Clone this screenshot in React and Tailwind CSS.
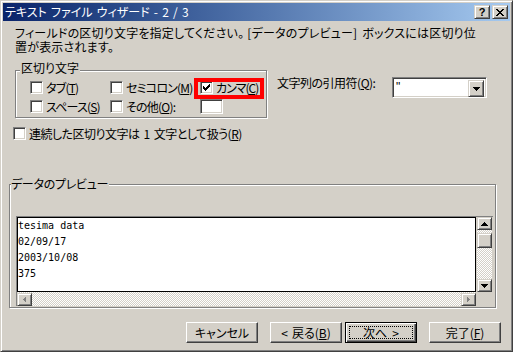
import React from "react";

function Check({ checked = false }) {
  return (
    <div className="w-[13px] h-[13px] shrink-0 bg-white border border-t-[#808080] border-l-[#808080] border-r-white border-b-white shadow-[inset_1px_1px_#404040,inset_-1px_-1px_#d4d0c8] flex items-center justify-center">
      {checked && (
        <svg width="7" height="7" viewBox="0 0 7 7" shapeRendering="crispEdges">
          <path d="M6 0h1v3h-1v1h-1v1h-1v1h-1v1h-1v-1h-1v-1h-1v-3h1v1h1v1h1v-1h1v-1h1z" fill="#000" />
        </svg>
      )}
    </div>
  );
}

function CheckItem({ checked, children, className = "", track = "tracking-[-0.8px]" }) {
  return (
    <div className={"flex items-center h-[13px] " + className}>
      <Check checked={checked} />
      <span className={"ml-[3px] whitespace-nowrap leading-[14px] " + track}>{children}</span>
    </div>
  );
}

function Btn({ children, def = false }) {
  if (def) {
    return (
      <div className="relative w-[72px] h-[21px] border border-black shadow-[inset_1px_1px_#fff,inset_-1px_-1px_#404040,inset_-2px_-2px_#808080] flex items-center justify-center whitespace-pre">
        {children}
        <div className="absolute inset-[3px] border border-dotted border-black" />
      </div>
    );
  }
  return (
    <div className="w-[72px] h-[21px] border border-t-white border-l-white border-r-[#404040] border-b-[#404040] shadow-[inset_-1px_-1px_#808080] flex items-center justify-center whitespace-pre">
      {children}
    </div>
  );
}

function Arrow({ dir, gray = false }) {
  const c = gray ? "#808080" : "#000";
  const paths = {
    up: "M3 0h1v1h1v1h1v1h1v1h-7v-1h1v-1h1v-1h1z",
    down: "M0 0h7v1h-1v1h-1v1h-1v1h-1v-1h-1v-1h-1v-1h-1z",
  };
  if (dir === "left" || dir === "right") {
    return (
      <svg width="3" height="5" viewBox="0 0 3 5" shapeRendering="crispEdges">
        {dir === "left" ? (
          <path d="M2 0h1v5h-1v-1h-1v-1h-1v-1h1v-1h1z" fill={c} />
        ) : (
          <path d="M0 0h1v1h1v1h1v1h-1v1h-1v1h-1z" fill={c} />
        )}
      </svg>
    );
  }
  return (
    <svg width="7" height="4" viewBox="0 0 7 4" shapeRendering="crispEdges">
      <path d={paths[dir]} fill={c} />
    </svg>
  );
}

const raised =
  "bg-[#d4d0c8] border border-t-[#d4d0c8] border-l-[#d4d0c8] border-r-[#404040] border-b-[#404040] shadow-[inset_1px_1px_#fff,inset_-1px_-1px_#808080]";
const checker =
  "[background-image:repeating-conic-gradient(#fff_0_25%,#d4d0c8_0_50%)] [background-size:2px_2px]";

const U = ({ children }) => <span className="underline underline-offset-[1px]">{children}</span>;

export default function App() {
  return (
    <div className="w-[513px] h-[352px] overflow-hidden bg-[#d4d0c8] border border-t-[#d4d0c8] border-l-[#d4d0c8] border-r-[#404040] border-b-[#404040] shadow-[inset_1px_1px_#fff,inset_-1px_-1px_#808080] p-[2px] flex flex-col text-[12px] leading-[14px] text-black font-['Noto_Sans_CJK_JP',sans-serif] [font-feature-settings:'palt']">
      {/* title bar */}
      <div className="h-[18px] shrink-0 flex items-center bg-linear-to-r from-[#0a246a] to-[#a6caf0] pl-[2px] pr-[2px]">
        <span className="text-white whitespace-pre [word-spacing:1.5px]">テキスト ファイル ウィザード - 2 / 3</span>
        <div className="ml-auto flex gap-[2px]">
          <div className={"w-[16px] h-[14px] flex items-center justify-center " + raised}>
            <span className="font-['Liberation_Sans',sans-serif] font-bold text-[11px] leading-[11px]">?</span>
          </div>
          <div className={"w-[16px] h-[14px] flex items-center justify-center " + raised}>
            <svg width="8" height="7" viewBox="0 0 8 7" shapeRendering="crispEdges">
              <path d="M0 0h2v1h1v1h2v-1h1v-1h2v1h-1v1h-1v1h-1v1h1v1h1v1h1v1h-2v-1h-1v-1h-2v1h-1v1h-2v-1h1v-1h1v-1h1v-1h-1v-1h-1v-1h-1z" fill="#000" />
            </svg>
          </div>
        </div>
      </div>

      {/* description */}
      <div className="mt-[5px] ml-[12px] whitespace-pre tracking-[0.2px] [word-spacing:2px]">
        <div>フィールドの区切り文字を指定してください。<span className="ml-[3px]">[</span>データのプレビュー] ボックスには区切り位</div>
        <div>置が表示されます。</div>
      </div>

      {/* delimiter row */}
      <div className="mt-[16px] flex items-start">
        <div className="relative ml-[12px] w-[252px] h-[48px] border border-[#808080] shadow-[inset_1px_1px_#fff,1px_1px_#fff] pt-[10px] pl-[14px]">
          <span className="absolute left-[4px] top-[-10px] px-[1px] bg-[#d4d0c8]">区切り文字</span>
          <div className="flex">
            <CheckItem className="w-[80px]">タブ(<U>T</U>)</CheckItem>
            <CheckItem className="w-[90px]">セミコロン(<U>M</U>)</CheckItem>
            <CheckItem checked track="tracking-[-1px]">カンマ(<U>C</U>)</CheckItem>
          </div>
          <div className="flex mt-[6px] items-start">
            <CheckItem className="w-[80px]">スペース(<U>S</U>)</CheckItem>
            <CheckItem className="w-[90px]">その他(<U>O</U>):</CheckItem>
            <div className="w-[23px] h-[15px] -mt-[1px] bg-white border border-t-[#808080] border-l-[#808080] border-r-white border-b-white shadow-[inset_1px_1px_#404040,inset_-1px_-1px_#d4d0c8]" />
          </div>
          <div className="absolute left-[178px] top-[7px] w-[70px] h-[21px] border-[4px] border-[#ff0000]" />
        </div>
        <div className="ml-[10px] mt-[6px] w-[115px] whitespace-nowrap tracking-[-0.5px]">
          文字列の引用符(<U>Q</U>):
        </div>
        <div className="mt-[7px] w-[95px] h-[21px] bg-white border border-t-[#808080] border-l-[#808080] border-r-white border-b-white shadow-[inset_1px_1px_#404040,inset_-1px_-1px_#d4d0c8] p-[2px] flex">
          <span className="pl-[1px] leading-[14px] font-['Liberation_Sans',sans-serif]">"</span>
          <div className={"ml-auto w-[16px] h-[17px] flex items-center justify-center " + raised}>
            <Arrow dir="down" />
          </div>
        </div>
      </div>

      {/* consecutive */}
      <CheckItem className="mt-[9px] ml-[10px]" track="tracking-[-0.5px]">
        連続した区切り文字は<span className="mx-[4px]">1</span>文字として扱う(<U>R</U>)
      </CheckItem>

      {/* preview group */}
      <div className="relative mt-[44px] ml-[6px] w-[487px] h-[124px] border border-[#808080] shadow-[inset_1px_1px_#fff,1px_1px_#fff] pt-[31px] pl-[6px]">
        <span className="absolute left-[1px] top-[-8px] pr-[1px] bg-[#d4d0c8] tracking-[-0.3px]">データのプレビュー</span>
        <div className="w-[477px] h-[90px] border-l border-t border-[#808080] grid grid-cols-[459px_16px] grid-rows-[75px_14px]">
          <div className="bg-white border border-black font-['DejaVu_Sans_Mono',monospace] text-[10px] leading-[16px] whitespace-pre">
            {"tesima data\n02/09/17\n2003/10/08\n375"}
          </div>
          <div className="flex flex-col pl-[1px]">
            <div className={"h-[13px] flex items-center justify-center " + raised}>
              <Arrow dir="up" />
            </div>
            <div className={"h-[3px] " + checker} />
            <div className={"h-[15px] " + raised} />
            <div className={"flex-1 " + checker} />
            <div className={"h-[13px] flex items-center justify-center " + raised}>
              <Arrow dir="down" />
            </div>
          </div>
          <div className={"flex pt-[1px] " + checker}>
            <div className={"w-[15px] h-[13px] flex items-center justify-center " + raised}>
              <Arrow dir="left" gray />
            </div>
            <div className="flex-1" />
            <div className={"w-[15px] h-[13px] flex items-center justify-center " + raised}>
              <Arrow dir="right" gray />
            </div>
          </div>
          <div className="bg-[#d4d0c8]" />
        </div>
      </div>

      {/* buttons */}
      <div className="mt-[14px] ml-[183px] flex">
        <Btn>キャンセル</Btn>
        <div className="ml-[12px]">
          <Btn>
            <span className="mr-[4px]">&lt;</span>戻る(<U>B</U>)
          </Btn>
        </div>
        <div className="ml-[3px]">
          <Btn def>
            次へ<span className="ml-[5px]">&gt;</span>
          </Btn>
        </div>
        <div className="ml-[12px]">
          <Btn>完了(<U>F</U>)</Btn>
        </div>
      </div>
    </div>
  );
}
